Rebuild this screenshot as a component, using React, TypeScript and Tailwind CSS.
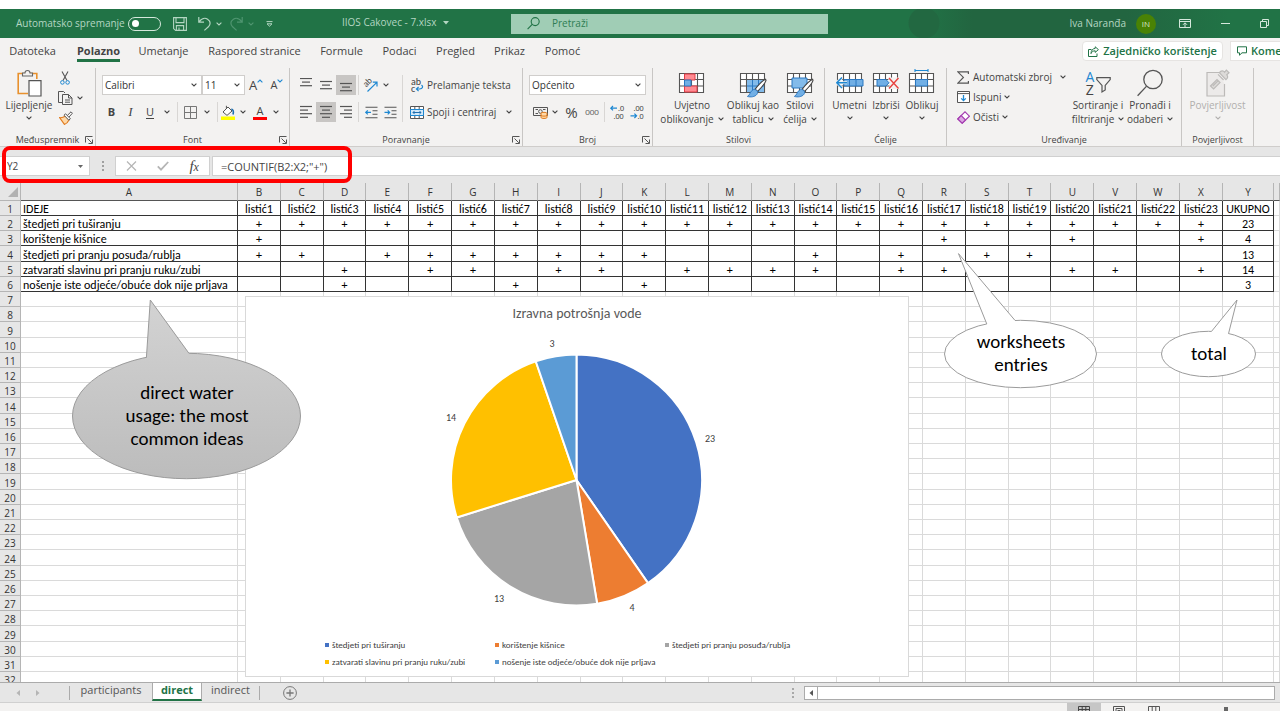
import type { ReactNode } from "react";

const UI = "font-['Open_Sans','Noto_Sans',sans-serif]";
const SHEET = "font-[Carlito,Calibri,Lato,sans-serif]";

/* ---------- small shared pieces ---------- */

function Chevron({ className = "" }: { className?: string }) {
  return (
    <svg viewBox="0 0 6 4" className={`h-1 w-1.5 shrink-0 ${className}`} fill="none" stroke="currentColor" strokeWidth="1.1">
      <path d="M0.6 0.6 3 3 5.4 0.6" />
    </svg>
  );
}

function Launcher() {
  return (
    <button aria-label="Postavke grupe" className="flex h-3 w-3 items-center justify-center">
      <svg viewBox="0 0 8 8" className="h-2 w-2" fill="none" stroke="#555" strokeWidth="1">
        <path d="M0.5 6.5V0.5H7.5M2.5 2.5 6.8 6.8M7.5 3.5V7.5H3.5" />
      </svg>
    </button>
  );
}

function Group({ label, width, launcher, children }: { label: string; width: string; launcher?: boolean; children: ReactNode }) {
  return (
    <section aria-label={label} className={`flex shrink-0 flex-col border-r border-[#c8c6c4] ${width}`}>
      <div className="h-[66px]">{children}</div>
      <div className="flex h-3 items-center">
        <span className="w-3" />
        <span className="flex-1 text-center text-[9px] leading-3 whitespace-nowrap">{label}</span>
        <span className="w-3">{launcher && <Launcher />}</span>
      </div>
    </section>
  );
}

function IconButton({ label, width = "w-5", active, children }: { label: string; width?: string; active?: boolean; children: ReactNode }) {
  return (
    <button aria-label={label} className={`flex h-5 shrink-0 items-center justify-center ${width} ${active ? "bg-[#c8c6c4]" : ""}`}>
      {children}
    </button>
  );
}

function Sep() {
  return <span className="h-5 w-px shrink-0 bg-[#d8d6d4]" />;
}

function Lines({ rows, y = 1 }: { rows: [number, number][]; y?: number }) {
  return (
    <svg viewBox="0 0 14 14" className="h-3.5 w-3.5" stroke="#555" strokeWidth="1.2">
      {rows.map(([a, b], i) => (
        <path key={i} d={`M${a} ${y + i * 3.6 + 0.5}H${b}`} />
      ))}
    </svg>
  );
}

function SelectBox({ label, value, width }: { label: string; value: string; width: string }) {
  return (
    <span className={`relative flex h-5 items-center border border-[#d0cecc] bg-white ${width}`}>
      <select aria-label={label} className="h-full w-full appearance-none bg-transparent pl-0.5 text-[10px] leading-4 text-[#333] outline-none">
        <option>{value}</option>
      </select>
      <Chevron className="pointer-events-none absolute right-1" />
    </span>
  );
}

function BigButton({ lines, width, chevron = "inline", dim, children }: { lines: string[]; width: string; chevron?: "inline" | "below"; dim?: boolean; children: ReactNode }) {
  return (
    <button className={`flex shrink-0 flex-col items-center text-[10px] leading-[14px] whitespace-nowrap ${width} ${dim ? "text-[#b1afad]" : ""}`}>
      <span className="flex h-[30px] items-center">{children}</span>
      {lines.map((t, i) => (
        <span key={t} className="flex items-center gap-1">
          {t}
          {chevron === "inline" && i === lines.length - 1 && <Chevron />}
        </span>
      ))}
      {chevron === "below" && (
        <span className="flex h-3 items-center">
          <Chevron />
        </span>
      )}
    </button>
  );
}

/* ---------- title bar ---------- */

function TitleBar() {
  return (
    <header className="flex h-[29px] shrink-0 items-center bg-[#217346] bg-[radial-gradient(circle_at_924px_14px,#226841_0_15px,transparent_16px),linear-gradient(90deg,transparent_72%,#226540_76%,#226540_88%,#217346_96%)] text-[10px] text-[#b4d6c2]">
      <div className="flex w-[511px] shrink-0 items-center">
        <span id="autosave" className="w-28 pl-4 whitespace-nowrap">Automatsko spremanje</span>
        <button role="switch" aria-checked="false" aria-labelledby="autosave" className="ml-4 flex h-3.5 w-[33px] items-center rounded-full border border-[#d5e8dc] pl-[3px]">
          <span className="h-[7px] w-[7px] rounded-full bg-white" />
        </button>
        <button aria-label="Spremi" className="ml-3">
          <svg viewBox="0 0 14 14" className="h-3.5 w-3.5" fill="none" stroke="#b4d6c2" strokeWidth="1.1">
            <path d="M0.6 0.6H13.4V13.4H2.6L0.6 11.6ZM3 0.6V5.6H11V0.6M3.4 13.4V8.6H10.6V13.4M6 10.6V13.4" />
          </svg>
        </button>
        <button aria-label="Poništi" className="ml-[11px] flex items-center gap-[5px]">
          <svg viewBox="0 0 13 15" className="h-[15px] w-[13px]" fill="none" stroke="#b4d6c2" strokeWidth="1.2">
            <path d="M0.8 1V6.2H6M1 6C3.5 2.4 7 1.4 9.6 3.2 13 5.6 12.6 8.6 10.4 10.8L6.4 14.4" />
          </svg>
          <Chevron />
        </button>
        <button aria-label="Ponovi" className="ml-2 flex items-center gap-[5px] text-[#4f9570]">
          <svg viewBox="0 0 13 15" className="h-[15px] w-[13px]" fill="none" stroke="currentColor" strokeWidth="1.2">
            <path d="M12.2 1V6.2H7M12 6C9.5 2.4 6 1.4 3.4 3.2 0 5.6 0.4 8.6 2.6 10.8L6.6 14.4" />
          </svg>
          <Chevron />
        </button>
        <button aria-label="Prilagodi alatnu traku" className="ml-3">
          <svg viewBox="0 0 7 6" className="h-1.5 w-[7px]" fill="none" stroke="#b4d6c2">
            <path d="M0.5 0.6H6.5M1 2.8H6L3.5 5.2Z" />
          </svg>
        </button>
        <button className="ml-[69px] flex items-center gap-1.5 pb-0.5 whitespace-nowrap">
          IIOS Cakovec - 7.xlsx
          <svg viewBox="0 0 6 4" className="h-1 w-1.5 fill-[#b4d6c2]"><path d="M0 0H6L3 3.4Z" /></svg>
        </button>
      </div>
      <label className="flex h-5 w-[317px] items-center gap-3 bg-[#a0cdb5] pl-4">
        <svg viewBox="0 0 13 13" className="h-[13px] w-[13px] shrink-0" fill="none" stroke="#217346" strokeWidth="1.1">
          <circle cx="8.2" cy="4.6" r="4" />
          <path d="M5.2 7.4 0.6 12.2" />
        </svg>
        <input aria-label="Pretraži" placeholder="Pretraži" className="min-w-0 flex-1 bg-transparent text-[10px] outline-none placeholder:text-[#2f7d54]" />
      </label>
      <div className="ml-auto flex items-center pr-[11px]">
        <span className="whitespace-nowrap">Iva Naranđa</span>
        <button aria-label="Račun" className="ml-2.5 h-5 w-5 rounded-full bg-[#498205] text-[8px] leading-5 text-[#d6e6c2]">IN</button>
        <button aria-label="Mogućnosti prikaza vrpce" className="ml-[23px]">
          <svg viewBox="0 0 12 9" className="h-[9px] w-3" fill="none" stroke="#d5e8dc">
            <path d="M0.5 0.5H11.5V8.5H0.5ZM0.5 2.5H11.5M6 8V4M4 5.8 6 3.8 8 5.8" />
          </svg>
        </button>
        <button aria-label="Minimiziraj" className="ml-[30px] flex h-5 w-[9px] items-center"><span className="h-px w-full bg-[#d5e8dc]" /></button>
        <button aria-label="Vrati" className="ml-[30px]">
          <svg viewBox="0 0 9 9" className="h-[9px] w-[9px]" fill="none" stroke="#d5e8dc">
            <path d="M0.5 2.5H6.5V8.5H0.5ZM2.5 2.5V0.5H8.5V6.5H6.5" />
          </svg>
        </button>
      </div>
    </header>
  );
}

/* ---------- ribbon tabs ---------- */

const ribbonTabs: [string, string][] = [
  ["Datoteka", "w-[65px]"],
  ["Polazno", "w-[67px]"],
  ["Umetanje", "w-[63px]"],
  ["Raspored stranice", "w-[119px]"],
  ["Formule", "w-[55px]"],
  ["Podaci", "w-[61px]"],
  ["Pregled", "w-[51px]"],
  ["Prikaz", "w-[57px]"],
  ["Pomoć", "w-[49px]"],
];

function RibbonTabs() {
  return (
    <nav className="flex h-[26px] shrink-0 items-center overflow-hidden text-[11px] leading-4">
      {ribbonTabs.map(([name, width]) => (
        <a key={name} href="#" className={`flex h-full shrink-0 items-center justify-center whitespace-nowrap ${width}`}>
          {name === "Polazno" ? (
            <span className="border-b-3 border-[#217346] pt-[3px] font-bold">{name}</span>
          ) : (
            name
          )}
        </a>
      ))}
      <div className="ml-auto flex shrink-0 gap-[7px] font-semibold text-[#217346]">
        <button className="flex h-5 w-[141px] items-center justify-center gap-1 rounded-sm border border-[#e6e4e2] bg-white whitespace-nowrap">
          <svg viewBox="0 0 11 11" className="h-[11px] w-[11px]" fill="none" stroke="#217346">
            <path d="M3.5 3.5H0.5V10.5H9V7.5M7.2 0.8 10.4 3.6 7.2 6.4V4.8C5 4.8 4 5.6 3 7.6 3 4.6 4.6 2.6 7.2 2.4Z" />
          </svg>
          Zajedničko korištenje
        </button>
        <button aria-label="Komentari" className="flex h-5 w-[50px] items-center gap-1 border border-r-0 border-[#e6e4e2] bg-white pl-1.5 whitespace-nowrap">
          <svg viewBox="0 0 10 10" className="h-2.5 w-2.5 shrink-0" fill="none" stroke="#217346">
            <path d="M0.5 0.8H9.5V6.8H5L2.5 9.2V6.8H0.5Z" />
          </svg>
          Kome
        </button>
      </div>
    </nav>
  );
}

/* ---------- ribbon icons ---------- */

function GridIcon({ children }: { children?: ReactNode }) {
  return (
    <svg viewBox="0 0 28 30" className="h-[30px] w-7" fill="none">
      <path d="M1.5 5.5H25.5V24.5H1.5ZM1.5 11.5H25.5M1.5 18H25.5M7.5 5.5V24.5M13.5 5.5V24.5M19.5 5.5V24.5" fill="#fff" stroke="#555" strokeWidth="1.1" />
      {children}
    </svg>
  );
}

function Brush() {
  return (
    <g>
      <path d="M26.6 11.2C24 12.4 19 17.4 16.2 21.2L18.6 23.4C22 20 26 15.4 27 12.6Z" fill="#fff" stroke="#444" strokeWidth="1.1" />
      <path d="M8.4 28.4C11 27.6 10.8 23 14.4 21.6 17.6 21 19.6 24 18 26.2 16 29 11.4 29.4 8.4 28.4Z" fill="#71afe5" stroke="#2b78c2" strokeWidth="0.9" />
    </g>
  );
}

function Merge() {
  return (
    <svg viewBox="0 0 14 13" className="h-[13px] w-3.5 shrink-0" fill="none">
      <path d="M0.5 0.5H13.5V12.5H0.5ZM4.8 0.5V3.5M9.2 0.5V3.5M4.8 9.5V12.5M9.2 9.5V12.5" fill="#fff" stroke="#555" />
      <path d="M0.5 3.5H13.5V9.5H0.5Z" fill="#d3e8f8" stroke="#1e88d2" />
      <path d="M3 6.5H11M4.6 4.9 3 6.5 4.6 8.1M9.4 4.9 11 6.5 9.4 8.1" stroke="#1e6fb0" />
    </svg>
  );
}

function Indent({ out }: { out?: boolean }) {
  return (
    <svg viewBox="0 0 13 13" className="h-[13px] w-[13px]" fill="none">
      <path d="M0.5 1.2H12.5M7.5 4.7H12.5M7.5 8.2H12.5M0.5 11.7H12.5" stroke="#555" strokeWidth="1.1" />
      <path d={out ? "M6 6.4H0.8M2.8 4.4 0.8 6.4 2.8 8.4" : "M0.5 6.4H5.7M3.7 4.4 5.7 6.4 3.7 8.4"} stroke="#1e88d2" strokeWidth="1.2" />
    </svg>
  );
}

function Decimal({ more }: { more?: boolean }) {
  return (
    <svg viewBox="0 0 14 14" className="h-3.5 w-3.5 overflow-visible" fill="#444" fontSize="8" fontFamily="Carlito, Lato, sans-serif">
      <text x={more ? 8 : 3.5} y="5.5">{more ? ".0" : ".00"}</text>
      <text x={more ? 3.5 : 7.5} y="13.5">{more ? ".00" : ".0"}</text>
      <path d={more ? "M7 3.2H0.8M3 1 0.8 3.2 3 5.4" : "M0.5 10.8H6.6M4.4 8.6 6.6 10.8 4.4 13"} fill="none" stroke="#1e88d2" strokeWidth="1.2" />
    </svg>
  );
}

/* ---------- ribbon ---------- */

function Ribbon() {
  return (
    <div className="flex h-[83px] shrink-0 overflow-hidden border-b border-[#cfcdcb] pt-1">
      <Group label="Međuspremnik" width="w-24" launcher>
        <div className="flex">
          <BigButton lines={["Lijepljenje"]} width="w-[58px]" chevron="below">
            <svg viewBox="0 0 25 28" className="h-7 w-[25px]" fill="none">
              <path d="M11 24.5H1.2V4.5H19.8V10" fill="#f3f2f1" stroke="#e8912d" strokeWidth="1.6" />
              <path d="M5.5 7V4H8C8 0.6 13 0.6 13 4H15.5V7Z" fill="#f3f2f1" stroke="#666" strokeWidth="1.1" />
              <path d="M12 11.6H24V27H12Z" fill="#fff" stroke="#555" strokeWidth="1.2" />
            </svg>
          </BigButton>
          <div className="flex w-7 flex-col">
            <IconButton label="Izreži" width="w-3.5">
              <svg viewBox="0 0 10 14" className="h-3.5 w-2.5" fill="none">
                <path d="M2 0.5 7 9.6M8 0.5 3 9.6" stroke="#555" strokeWidth="1.1" />
                <circle cx="2.4" cy="11.4" r="1.8" stroke="#1e88d2" /><circle cx="7.6" cy="11.4" r="1.8" stroke="#1e88d2" />
              </svg>
            </IconButton>
            <button aria-label="Kopiraj" className="flex h-5 items-center gap-1">
              <svg viewBox="0 0 15 14" className="h-3.5 w-[15px]" fill="none" stroke="#555">
                <path d="M5 11.5H0.5V0.5H5.5L7 2M4.5 3.5H10.5L14 7V13.5H4.5ZM10.5 3.5V7H14M7 9H12M7 11.2H12" />
              </svg>
              <Chevron />
            </button>
            <IconButton label="Prenositelj oblikovanja" width="w-[15px]">
              <svg viewBox="0 0 14 14" className="h-3.5 w-3.5" fill="none">
                <path d="M0.6 6.6C3 7 5 6 6.4 5L10 9C9 11 7 13 5.4 13.4Z" fill="#ffd9a8" stroke="#e07b1e" strokeWidth="1.1" />
                <path d="M5 4.2 6.6 2.8 11.4 7.8 9.8 9.2ZM8.4 4.4 12 0.8 13.4 2.2 10 6" fill="#fff" stroke="#555" />
              </svg>
            </IconButton>
          </div>
        </div>
      </Group>

      <Group label="Font" width="w-[194px]" launcher>
        <div className="flex flex-col gap-[7px] pt-[7px] pl-1.5">
          <div className="flex items-center">
            <SelectBox label="Font" value="Calibri" width="w-[100px]" />
            <SelectBox label="Veličina fonta" value="11" width="w-[43px]" />
            <IconButton label="Povećaj font" width="w-[22px]">
              <span className="text-[13px] leading-4">A</span><Chevron className="mb-2 rotate-180 text-[#1e88d2]" />
            </IconButton>
            <IconButton label="Smanji font" width="w-5">
              <span className="text-[11px] leading-4">A</span><Chevron className="mb-2 text-[#1e88d2]" />
            </IconButton>
          </div>
          <div className="flex items-center text-[11px]">
            <IconButton label="Podebljano" width="w-[19px]"><b>B</b></IconButton>
            <IconButton label="Kurziv" width="w-[19px]"><i className="font-[Liberation_Serif,serif] text-[13px]">I</i></IconButton>
            <IconButton label="Podcrtano" width="w-5"><span className="underline underline-offset-2">U</span></IconButton>
            <IconButton label="Vrste podcrtavanja" width="w-[13px]"><Chevron /></IconButton>
            <span className="w-1" />
            <Sep />
            <IconButton label="Obrubi" width="w-6">
              <svg viewBox="0 0 13 13" className="h-[13px] w-[13px]" fill="none" stroke="#777">
                <path d="M0.5 0.5H12.5V12.5H0.5ZM6.5 0.5V12.5M0.5 6.5H12.5" />
              </svg>
            </IconButton>
            <IconButton label="Vrste obruba" width="w-[9px]"><Chevron /></IconButton>
            <span className="w-1.5" />
            <Sep />
            <IconButton label="Boja ispune" width="w-5">
              <svg viewBox="0 0 14 15" className="h-[15px] w-3.5" fill="none">
                <path d="M2 7 7 2 11 6 6 10.4ZM5.4 3.6V0.8" fill="#fff" stroke="#555" />
                <path d="M10.4 4C12.4 4.6 12.8 7 12 9.4" stroke="#1e6fb0" strokeWidth="1.6" />
                <path d="M0 11.5H14V15H0Z" fill="#ff0" />
              </svg>
            </IconButton>
            <IconButton label="Boje ispune" width="w-2.5"><Chevron /></IconButton>
            <IconButton label="Boja fonta" width="w-6">
              <span className="h-[15px] w-3.5 border-b-3 border-[#f00] text-center text-[11px] leading-3">A</span>
            </IconButton>
            <IconButton label="Boje fonta" width="w-2"><Chevron /></IconButton>
          </div>
        </div>
      </Group>

      <Group label="Poravnanje" width="w-[233px]" launcher>
        <div className="flex pt-[7px] pl-1.5">
          <div className="flex w-[107px] flex-col gap-[7px] border-r border-[#d8d6d4]">
            <div className="flex items-center">
              <IconButton label="Poravnaj gore"><Lines rows={[[1, 13], [3, 11], [1, 13]]} y={0} /></IconButton>
              <IconButton label="Poravnaj po sredini"><Lines rows={[[1, 13], [3, 11], [1, 13]]} y={3} /></IconButton>
              <IconButton label="Poravnaj dolje" active><Lines rows={[[1, 13], [3, 11], [1, 13]]} y={5} /></IconButton>
              <span className="w-0.5" />
              <Sep />
              <button aria-label="Orijentacija" className="flex h-5 items-center gap-1 pl-1">
                <svg viewBox="0 0 16 14" className="h-3.5 w-4 overflow-visible" fill="none">
                  <text x="1" y="8" fontSize="9" fill="#444" transform="rotate(-45 4 6)" fontFamily="Carlito, Lato, sans-serif">ab</text>
                  <path d="M4.5 13.5 13.6 4.6M9.8 4.2H14V8.4" stroke="#1e88d2" strokeWidth="1.2" />
                </svg>
                <Chevron />
              </button>
            </div>
            <div className="flex items-center">
              <IconButton label="Poravnaj lijevo"><Lines rows={[[1, 13], [1, 9], [1, 13], [1, 9]]} /></IconButton>
              <IconButton label="Centriraj" active><Lines rows={[[1, 13], [3, 11], [1, 13], [3, 11]]} /></IconButton>
              <IconButton label="Poravnaj desno"><Lines rows={[[1, 13], [5, 13], [1, 13], [5, 13]]} /></IconButton>
              <span className="w-0.5" />
              <Sep />
              <IconButton label="Smanji uvlaku" width="w-6"><Indent out /></IconButton>
              <IconButton label="Povećaj uvlaku" width="w-3.5"><Indent /></IconButton>
            </div>
          </div>
          <div className="flex flex-1 flex-col gap-[7px] pr-2.5 pl-[7px] text-[10px] whitespace-nowrap">
            <button className="flex h-5 items-center gap-[3px]">
              <svg viewBox="0 0 14 14" className="h-3.5 w-3.5 shrink-0 overflow-visible" fill="none" fontFamily="Carlito, Lato, sans-serif">
                <text x="1" y="6.5" fontSize="10" fill="#444">ab</text>
                <text x="1" y="13.5" fontSize="10" fill="#444">c</text>
                <path d="M11.5 7C13.6 8.6 12.6 11 9.6 11H6.4M8.6 8.8 6.4 11 8.6 13.2" stroke="#1e88d2" strokeWidth="1.2" />
              </svg>
              Prelamanje teksta
            </button>
            <button className="flex h-5 items-center gap-[3px]"><Merge />Spoji i centriraj<Chevron className="ml-auto" /></button>
          </div>
        </div>
      </Group>

      <Group label="Broj" width="w-[130px]" launcher>
        <div className="flex flex-col gap-[7px] pt-[7px] pl-1.5">
          <SelectBox label="Oblik broja" value="Općenito" width="w-[117px]" />
          <div className="flex items-center">
            <IconButton label="Valuta" width="w-[22px]">
              <svg viewBox="0 0 15 13" className="h-[13px] w-[15px]" fill="none">
                <path d="M0.5 1.5H14.5V9.5H0.5ZM2.5 3.5H5M10 3.5H12.5M2.5 7.5H5" stroke="#555" />
                <circle cx="7.4" cy="5.5" r="1.8" stroke="#555" />
                <path d="M8 7.4C8 6 14 6 14 7.4V11.4C14 12.8 8 12.8 8 11.4Z" fill="#ffd9a8" stroke="#e07b1e" />
                <path d="M8 9.4C9 10.4 13 10.4 14 9.4" stroke="#e07b1e" />
              </svg>
            </IconButton>
            <IconButton label="Vrste valuta" width="w-2"><Chevron /></IconButton>
            <IconButton label="Postotak" width="w-[25px]"><span className="text-[15px] leading-5">%</span></IconButton>
            <IconButton label="Zarez" width="w-4"><span className="font-[Carlito,Lato,sans-serif] text-[9px] text-[#666]">000</span></IconButton>
            <span className="w-1" />
            <Sep />
            <IconButton label="Više decimala" width="w-6"><Decimal more /></IconButton>
            <IconButton label="Manje decimala" width="w-4"><Decimal /></IconButton>
          </div>
        </div>
      </Group>

      <Group label="Stilovi" width="w-[172px]">
        <div className="flex pl-1">
          <BigButton lines={["Uvjetno", "oblikovanje"]} width="w-[70px]">
            <GridIcon>
              <path d="M6.5 6H17V12H6.5ZM6.5 18H19V24H6.5Z" fill="#ff8b92" stroke="#e23b45" />
              <path d="M6.5 12H13V18H6.5Z" fill="#71afe5" stroke="#2b78c2" />
            </GridIcon>
          </BigButton>
          <BigButton lines={["Oblikuj kao", "tablicu"]} width="w-[52px]">
            <GridIcon>
              <path d="M8 12H25V24H8Z" fill="#83bbea" />
              <path d="M8 18H25M13.5 12V24M19.5 12V24" stroke="#2b78c2" />
              <Brush />
            </GridIcon>
          </BigButton>
          <BigButton lines={["Stilovi", "ćelija"]} width="w-[42px]">
            <GridIcon>
              <path d="M6 10H21V20H6Z" fill="#83bbea" stroke="#2b78c2" />
              <Brush />
            </GridIcon>
          </BigButton>
        </div>
      </Group>

      <Group label="Ćelije" width="w-[122px]">
        <div className="flex pl-1.5">
          <BigButton lines={["Umetni"]} width="w-[37px]" chevron="below">
            <GridIcon>
              <path d="M8 11.5H27V18H8Z" fill="#71afe5" stroke="#2b78c2" />
              <path d="M13.5 11.5V18M20 11.5V18" stroke="#2b78c2" />
              <path d="M11 14.8H1M6 9.6 0.8 14.8 6 20" stroke="#f3f2f1" strokeWidth="3" />
              <path d="M11 14.8H1M6 9.6 0.8 14.8 6 20" stroke="#1e88d2" strokeWidth="1.4" />
            </GridIcon>
          </BigButton>
          <BigButton lines={["Izbriši"]} width="w-9" chevron="below">
            <GridIcon>
              <path d="M16 9.5H28V21H18Z" fill="#f3f2f1" />
              <path d="M5 11.5H14L17 14.8 14 18H5Z" fill="#71afe5" stroke="#2b78c2" />
              <path d="M17 10 26.5 20.5M26.5 10 17 20.5" stroke="#e8433f" strokeWidth="1.4" />
            </GridIcon>
          </BigButton>
          <BigButton lines={["Oblikuj"]} width="w-9" chevron="below">
            <GridIcon>
              <path d="M7.5 11.5H19.5V18H7.5Z" fill="#71afe5" stroke="#2b78c2" />
              <path d="M7 2.5H20M7 1V4M20 1V4" stroke="#1e88d2" strokeWidth="1.1" />
            </GridIcon>
          </BigButton>
        </div>
      </Group>

      <Group label="Uređivanje" width="w-[235px]">
        <div className="flex">
          <div className="flex w-[125px] flex-col gap-0.5 pr-1.5 pl-2.5 text-[10px] whitespace-nowrap">
            <button className="flex h-[18px] items-center gap-1">
              <svg viewBox="0 0 12 13" className="h-[13px] w-3" fill="none" stroke="#555" strokeWidth="1.2">
                <path d="M11.4 3V0.8H0.8L6.4 6.4 0.8 12.2H11.4V10" />
              </svg>
              Automatski zbroj<Chevron className="ml-auto" />
            </button>
            <button className="flex h-[18px] items-center gap-[3px]">
              <svg viewBox="0 0 13 12" className="h-3 w-[13px]" fill="none">
                <path d="M0.5 0.5H12.5V11.5H0.5ZM0.5 2.6H12.5" stroke="#555" fill="#fff" />
                <path d="M6.5 4V9.6M4.2 7.4 6.5 9.7 8.8 7.4" stroke="#1e88d2" strokeWidth="1.3" />
              </svg>
              Ispuni<Chevron />
            </button>
            <button className="flex h-[18px] items-center gap-[3px]">
              <svg viewBox="0 0 13 13" className="h-[13px] w-[13px]" fill="none" stroke="#a43bb0" strokeWidth="1.1">
                <path d="M0.8 8 8 0.8 12.4 5.2 5.2 12.2Z" fill="#fff" />
                <path d="M0.8 8 4.2 4.6 8.6 9 5.2 12.2Z" fill="#dba7e2" />
              </svg>
              Očisti<Chevron />
            </button>
          </div>
          <BigButton lines={["Sortiranje i", "filtriranje"]} width="w-[52px]">
            <svg viewBox="0 0 26 28" className="h-7 w-[26px]" fill="none" fontFamily="Open Sans, sans-serif">
              <text x="0.5" y="13" fontSize="14" fill="#1e88d2">A</text>
              <text x="0.8" y="26" fontSize="14" fill="#444">Z</text>
              <path d="M11.8 8.6H25.2V10.6L20.2 16.4V21L17 23V16.4L11.8 10.6Z" stroke="#555" strokeWidth="1.2" />
            </svg>
          </BigButton>
          <BigButton lines={["Pronađi i", "odaberi"]} width="w-[52px]">
            <svg viewBox="0 0 26 28" className="h-7 w-[26px]" fill="none" stroke="#555" strokeWidth="1.3">
              <circle cx="16" cy="10.5" r="9.2" /><path d="M9.4 17.4 0.6 26.8" />
            </svg>
          </BigButton>
        </div>
      </Group>

      <Group label="Povjerljivost" width="w-[72px]">
        <div className="flex justify-center">
          <BigButton lines={["Povjerljivost"]} width="w-[60px]" chevron="below" dim>
            <svg viewBox="0 0 24 28" className="h-7 w-6" fill="none" stroke="#bcbab8" strokeWidth="1.2">
              <path d="M13 3.5H1V27H18.5V15" fill="#eceae9" />
              <path d="M4.5 17 11 10.6 14 13.6 7.6 20ZM6.8 17 12 11.8" fill="#dddbd9" />
              <path d="M12 5.4 17.6 11M13.4 3.6C15 1.4 17.4 1.4 18.6 3.2L20.4 1.2 23 3.8 20.8 5.8C22.4 7.6 21.6 9.4 20 10.6Z" fill="#dddbd9" />
            </svg>
          </BigButton>
        </div>
      </Group>
    </div>
  );
}

/* ---------- formula bar ---------- */

function FormulaBar() {
  return (
    <div className="relative flex h-9 shrink-0 items-center bg-[#e6e6e6] pt-0.5 text-[11px] text-[#444]">
      <div className="flex h-5 w-[90px] items-center border border-l-0 border-[#d0d0d0] bg-white">
        <input aria-label="Okvir naziva" defaultValue="Y2" className="w-full min-w-0 bg-transparent pl-[7px] text-[10px] outline-none" />
        <svg viewBox="0 0 5 3" className="mr-1.5 h-[3px] w-[5px] shrink-0 fill-[#666]"><path d="M0 0H5L2.5 3Z" /></svg>
      </div>
      <span className="flex w-[25px] flex-col items-center gap-0.5">
        <i className="h-0.5 w-0.5 bg-[#a0a0a0]" /><i className="h-0.5 w-0.5 bg-[#a0a0a0]" /><i className="h-0.5 w-0.5 bg-[#a0a0a0]" />
      </span>
      <div className="flex h-5 w-[95px] items-center justify-around border border-[#d0d0d0] bg-white">
        <button aria-label="Odustani">
          <svg viewBox="0 0 11 10" className="h-2.5 w-[11px]" stroke="#b5b5b5" strokeWidth="1.2"><path d="M1 0.5 10 9.5M10 0.5 1 9.5" /></svg>
        </button>
        <button aria-label="Unesi">
          <svg viewBox="0 0 12 10" className="h-2.5 w-3" fill="none" stroke="#b5b5b5" strokeWidth="1.8"><path d="M0.8 5.4 4 8.6 11.2 1" /></svg>
        </button>
        <button aria-label="Umetni funkciju" className="font-[Liberation_Serif,serif] text-[15px] leading-4 text-[#444] italic">
          f<span className="text-[12px]">x</span>
        </button>
      </div>
      <input aria-label="Traka formule" defaultValue={'=COUNTIF(B2:X2;"+")'} className="ml-0.5 h-5 min-w-0 flex-1 border border-r-0 border-[#d0d0d0] bg-white pl-2 outline-none" />
      <span className="pointer-events-none absolute -top-px left-0.5 h-[37px] w-[350px] rounded-lg border-4 border-[#f00]" />
    </div>
  );
}

/* ---------- worksheet ---------- */

const letters = "BCDEFGHIJKLMNOPQRSTUVWX".split("");

const ideas: { name: string; entries: string; total: number; color: string }[] = [
  { name: "štedjeti pri tuširanju", entries: "BCDEFGHIJKLMNOPQRSTUVWX", total: 23, color: "#4472c4" },
  { name: "korištenje kišnice", entries: "BRUX", total: 4, color: "#ed7d31" },
  { name: "štedjeti pri pranju posuđa/rublja", entries: "BCEFGHIJKOQST", total: 13, color: "#a5a5a5" },
  { name: "zatvarati slavinu pri pranju ruku/zubi", entries: "DFGIJLMNOQRUVX", total: 14, color: "#ffc000" },
  { name: "nošenje iste odjeće/obuće dok nije prljava", entries: "DHK", total: 3, color: "#5b9bd5" },
];

function Sheet() {
  const filled = "border-r border-b border-[#333] p-0 align-bottom";
  const empty = "border-r border-b border-[#dadada] p-0 align-bottom";
  return (
    <table className="w-full table-fixed border-separate border-spacing-0 text-center text-[12px] leading-3 text-black">
      <colgroup>
        <col className="w-[21px]" />
        <col className="w-[217px]" />
        {letters.map((l) => <col key={l} />)}
        <col className="w-[51px]" />
        <col className="w-1.5" />
      </colgroup>
      <thead className={`${UI} bg-[#e6e6e6] text-[10px] text-[#333]`}>
        <tr className="h-[18px]">
          <th className="border-r border-b border-[#b5b5b5] p-0">
            <svg viewBox="0 0 10 10" className="mr-0.5 ml-auto h-2.5 w-2.5 fill-[#b2b2b2]"><path d="M10 0V10H0Z" /></svg>
          </th>
          {["A", ...letters, "Y", ""].map((l) => (
            <th key={l} scope="col" className="border-r border-b border-r-[#b5b5b5] border-b-[#555] p-0 font-normal">{l}</th>
          ))}
        </tr>
      </thead>
      <tbody>
        {Array.from({ length: 32 }, (_, i) => i + 1).map((n) => {
          const idea = ideas[n - 2];
          const cell = n <= 6 ? filled : empty;
          return (
            <tr key={n} className={n % 5 === 4 ? "h-4" : "h-[15px]"}>
              <th scope="row" className={`${UI} border-r border-b border-[#b5b5b5] bg-[#e6e6e6] p-0 align-bottom text-[10px] font-normal text-[#333]`}>{n}</th>
              <td className={`${cell} ${SHEET} pl-[2px] text-left whitespace-nowrap`}>{n === 1 ? "IDEJE" : idea?.name}</td>
              {letters.map((l, k) => (
                <td key={l} className={`${cell} ${SHEET} whitespace-nowrap`}>
                  {n === 1 ? `listić${k + 1}` : idea?.entries.includes(l) ? "+" : ""}
                </td>
              ))}
              <td className={`${cell} ${SHEET}`}>{n === 1 ? "UKUPNO" : idea?.total}</td>
              <td className={empty} />
            </tr>
          );
        })}
      </tbody>
    </table>
  );
}

const TOTAL = ideas.reduce((sum, d) => sum + d.total, 0);
const labelSpots: [number, number][] = [[464, 146], [386, 315], [253, 306], [205, 125], [306, 51]];

function PieChart() {
  const cx = 330.5, cy = 184, r = 125.5;
  let start = 0;
  const slices = ideas.map((d) => {
    const a = (start / TOTAL) * Math.PI * 2;
    start += d.total;
    const b = (start / TOTAL) * Math.PI * 2;
    const p = (t: number) => `${(cx + r * Math.sin(t)).toFixed(2)} ${(cy + r * -Math.cos(t)).toFixed(2)}`;
    return { color: d.color, d: `M${cx} ${cy}L${p(a)}A${r} ${r} 0 ${b - a > Math.PI ? 1 : 0} 1 ${p(b)}Z` };
  });
  return (
    <figure className={`absolute top-[113px] left-[245px] flex w-[664px] flex-col border border-[#d9d9d9] bg-white pb-2 text-[#595959] ${SHEET}`}>
      <figcaption className="pt-2 text-center text-[14px] leading-[18px]">Izravna potrošnja vode</figcaption>
      <svg viewBox="0 27 662 310" className="h-[310px] w-full" role="img" aria-label="Izravna potrošnja vode">
        {slices.map((s) => (
          <path key={s.color} d={s.d} fill={s.color} stroke="#fff" strokeWidth="2" strokeLinejoin="round" />
        ))}
        {ideas.map((d, i) => (
          <text key={d.name} x={labelSpots[i][0]} y={labelSpots[i][1]} textAnchor="middle" fontSize="10" fill="#404040">{d.total}</text>
        ))}
      </svg>
      <ul className="grid grid-cols-[170px_170px_auto] gap-y-[5px] pt-1.5 pl-[79px] text-[9px] leading-3 text-[#404040]">
        {ideas.map((d) => (
          <li key={d.name} className="flex items-center gap-[3px] whitespace-nowrap">
            <span className="h-1 w-1" style={{ backgroundColor: d.color }} />
            {d.name}
          </li>
        ))}
      </ul>
    </figure>
  );
}

function Callouts() {
  const text = `absolute flex items-center justify-center text-center text-[19px] leading-[23px] text-black ${SHEET}`;
  return (
    <>
      <div className="absolute top-[116px] left-[72px]">
        <svg viewBox="0 0 230 181" className="h-[181px] w-[230px]" stroke="#9b9b9b">
          <defs>
            <linearGradient id="bubble" gradientUnits="userSpaceOnUse" x1="0" y1="0" x2="0" y2="180">
              <stop offset="0" stopColor="#d3d3d3" /><stop offset="1" stopColor="#bcbcbc" />
            </linearGradient>
          </defs>
          <ellipse cx="114.5" cy="117" rx="114" ry="62.7" fill="url(#bubble)" />
          <path d="M74.4 62V58.3L78.3 1 117 54.3V62Z" fill="url(#bubble)" stroke="none" />
          <path d="M74.4 58.6 78.3 1 117 54.4" fill="none" />
        </svg>
        <p className={`${text} inset-x-0 top-[53px] h-[126px]`}>direct water<br />usage: the most<br />common ideas</p>
      </div>
      <div className="absolute top-[69px] left-[944px]">
        <svg viewBox="0 0 154 137" className="h-[137px] w-[154px]" fill="#fff" stroke="#9b9b9b">
          <ellipse cx="76.5" cy="102" rx="76" ry="33.7" />
          <path d="M42.8 76V71.8L14.5 1.6 71 68.3V76Z" stroke="none" />
          <path d="M42.8 72 14.5 1.6 71 68.4" fill="none" />
        </svg>
        <p className={`${text} inset-x-0 top-[67px] h-[67px]`}>worksheets<br />entries</p>
      </div>
      <div className="absolute top-[115px] left-[1161px]">
        <svg viewBox="0 0 96 80" className="h-20 w-24" fill="#fff" stroke="#9b9b9b">
          <ellipse cx="47.5" cy="56" rx="47" ry="22.7" />
          <path d="M67.5 40V35.5L76 2 50.5 33.3V40Z" stroke="none" />
          <path d="M67.5 35.7 76 2 50.5 33.4" fill="none" />
        </svg>
        <p className={`${text} inset-x-0 top-8 h-[46px]`}>total</p>
      </div>
    </>
  );
}

/* ---------- bottom bars ---------- */

function SheetTabs() {
  return (
    <nav className="flex h-5 shrink-0 items-center border-t border-[#ababab] bg-[#e6e6e6] text-[11px] leading-3.5 text-[#555]">
      <div className="flex w-[69px] items-center gap-4 pl-4">
        <svg viewBox="0 0 4 6" className="h-1.5 w-1 fill-[#b5b5b5]"><path d="M4 0V6L0.5 3Z" /></svg>
        <svg viewBox="0 0 4 6" className="h-1.5 w-1 fill-[#b5b5b5]"><path d="M0 0V6L3.5 3Z" /></svg>
      </div>
      <span className="h-3.5 w-px bg-[#ababab]" />
      <a href="#participants" className="w-[82px] pb-1.5 text-center">participants</a>
      <a href="#direct" className="mb-0.5 h-[18px] w-[50px] border-x border-b-2 border-x-[#ababab] border-b-[#217346] bg-white text-center font-bold text-[#217346]">direct</a>
      <a href="#indirect" className="w-[57px] pb-1.5 text-center">indirect</a>
      <span className="h-3.5 w-px bg-[#ababab]" />
      <button aria-label="Novi list" className="ml-[23px]">
        <svg viewBox="0 0 14 14" className="h-3.5 w-3.5" fill="none" stroke="#777"><circle cx="7" cy="7" r="6.4" /><path d="M7 3.4V10.6M3.4 7H10.6" strokeWidth="1.3" /></svg>
      </button>
      <span className="ml-auto flex flex-col gap-0.5">
        <i className="h-0.5 w-0.5 bg-[#a8a8a8]" /><i className="h-0.5 w-0.5 bg-[#a8a8a8]" /><i className="h-0.5 w-0.5 bg-[#a8a8a8]" />
      </span>
      <div className="ml-2.5 flex h-3.5 w-[471px] border border-[#ababab] bg-white">
        <button aria-label="Pomakni lijevo" className="flex w-[13px] items-center justify-center border-r border-[#ababab]">
          <svg viewBox="0 0 4 6" className="h-1.5 w-1 fill-[#555]"><path d="M4 0V6L0.5 3Z" /></svg>
        </button>
      </div>
      <span className="w-[5px]" />
    </nav>
  );
}

function StatusBar() {
  return (
    <footer className="flex h-[9px] shrink-0 justify-end overflow-hidden border-t border-[#d0d0d0] bg-[#f3f2f1] pr-[52px]">
      <button aria-label="Normalno" className="flex w-[34px] justify-center bg-[#c6c6c6] pt-[3px]">
        <svg viewBox="0 0 12 10" className="h-2.5 w-3 shrink-0" fill="none" stroke="#444"><path d="M0.5 0.5H11.5V9.5H0.5ZM4.2 0.5V9.5M7.8 0.5V9.5M0.5 3.5H11.5" /></svg>
      </button>
      <button aria-label="Izgled stranice" className="flex w-9 justify-center pt-[3px]">
        <svg viewBox="0 0 12 10" className="h-2.5 w-3 shrink-0" fill="none" stroke="#555"><path d="M0.5 0.5H11.5V9.5H0.5ZM3 2.5H9V9.5H3ZM4.5 4.5H7.5" /></svg>
      </button>
      <button aria-label="Prijelom stranice" className="flex w-[34px] justify-center pt-[3px]">
        <svg viewBox="0 0 12 10" className="h-2.5 w-3 shrink-0" fill="none" stroke="#555"><path d="M0.5 9.5V0.5H11.5V9.5M4.2 0.5V6M7.8 0.5V6" /></svg>
      </button>
      <span className="mt-1 ml-[53px] h-2 w-1 bg-[#666]" />
    </footer>
  );
}

export default function App() {
  return (
    <div className={`flex h-screen flex-col overflow-hidden bg-white py-[9px] text-[#444] ${UI}`}>
      <TitleBar />
      <div className="shrink-0 bg-[#f3f2f1]">
        <RibbonTabs />
        <Ribbon />
      </div>
      <FormulaBar />
      <main className="relative min-h-0 flex-1 overflow-hidden">
        <Sheet />
        <PieChart />
        <Callouts />
      </main>
      <SheetTabs />
      <StatusBar />
    </div>
  );
}
